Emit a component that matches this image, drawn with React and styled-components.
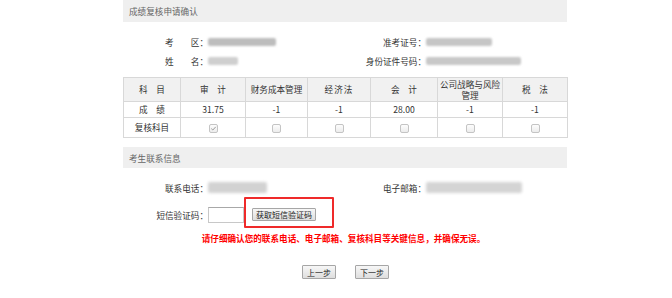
import React from "react";
import styled, { createGlobalStyle } from "styled-components";

const Global = createGlobalStyle`
  html, body { margin: 0; padding: 0; background: #fff; }
  body { font-family: "Noto Sans CJK SC", "Noto Sans", sans-serif; color: #333; }
`;

const Page = styled.div`
  width: 444px;
  margin-left: 123px;
  font-size: 8.6px;
`;

const SectionBar = styled.div`
  height: ${(p) => p.$h || 22}px;
  margin-top: ${(p) => p.$mt || 0}px;
  background: #efefef;
  padding-left: 6px;
  display: flex;
  align-items: center;
  color: #666;
  font-size: 8.6px;
`;

const InfoGrid = styled.div`
  display: grid;
  grid-template-columns: 85px 131px 87px 1fr;
  grid-auto-rows: 19px;
  align-items: center;
  padding-top: 10px;
`;

const Label = styled.div`
  text-align: right;
  white-space: nowrap;
  color: #333;
  line-height: 12px;
`;

const Value = styled.div`
  display: flex;
  align-items: center;
  position: relative;
  height: 100%;
  grid-column: ${(p) => p.$span || "auto"};
`;

const Blur = styled.span`
  display: inline-block;
  width: ${(p) => p.$w}px;
  height: ${(p) => p.$h || 8}px;
  background: ${(p) => p.$c || "#bdbdbd"};
  filter: blur(${(p) => p.$b || 0.8}px);
  border-radius: 2px;
`;

const Table = styled.table`
  width: 444px;
  margin-top: 7px;
  border-collapse: collapse;
  table-layout: fixed;
  font-size: 8.6px;
`;

const Th = styled.th`
  background: #f1f1f1;
  border: 1px solid #d8d8d8;
  font-weight: normal;
  color: #333;
  height: 23px;
  padding: 0 1px;
  line-height: 10.5px;
  text-align: center;
  letter-spacing: ${(p) => (p.$ls ? p.$ls : 0)}px;
`;

const Td = styled.td`
  border: 1px solid #d8d8d8;
  text-align: center;
  color: #333;
  padding: 0;
  line-height: 11px;
  height: ${(p) => p.$h}px;
`;

const Check = styled.span`
  display: inline-block;
  width: 7px;
  height: 7px;
  border: 1px solid #c4c4c4;
  border-radius: 2px;
  background: linear-gradient(#fdfdfd, #ececec);
  vertical-align: middle;
  position: relative;
  svg { position: absolute; left: 0; top: 0; }
`;

const ContactGrid = styled(InfoGrid)`
  grid-template-rows: 19px 35px;
`;

const CodeInput = styled.input`
  width: 36px;
  height: 16px;
  box-sizing: border-box;
  border: 1px solid #c8c8c8;
  border-top-color: #a8a8a8;
  margin: 0 8px 0 0;
  padding: 0;
  outline: none;
`;

const Btn = styled.button`
  height: ${(p) => p.$h || 13}px;
  box-sizing: border-box;
  padding: 0 ${(p) => p.$px || 4}px;
  border: 1px solid #a6a6a6;
  border-radius: 1px;
  background: linear-gradient(#f7f7f7, #dedede);
  font-family: "Noto Sans CJK SC", sans-serif;
  font-size: 8px;
  line-height: 11px;
  color: #222;
  cursor: pointer;
`;

const RedBox = styled.div`
  position: absolute;
  left: 36px;
  top: 0;
  width: 90px;
  height: 31px;
  box-sizing: border-box;
  border: 2px solid #ef2a2a;
  border-radius: 1px;
  pointer-events: none;
`;

const Notice = styled.div`
  text-align: center;
  color: #ff0000;
  font-weight: bold;
  font-size: 8.6px;
  line-height: 12px;
  padding-right: 3px;
`;

const NavRow = styled.div`
  display: flex;
  justify-content: center;
  gap: 19px;
  margin-top: 21px;
  padding-left: 1px;
`;

const cols = [57, 65, 62, 63, 67, 65, 65];

function Box({ checked }) {
  return (
    <Check>
      {checked && (
        <svg width="7" height="7" viewBox="0 0 7 7">
          <path d="M1.3 3.6 L2.8 5 L5.8 1.8" fill="none" stroke="#9a9a9a" strokeWidth="1" />
        </svg>
      )}
    </Check>
  );
}

export default function App() {
  return (
    <>
      <Global />
      <Page>
        <SectionBar>成绩复核申请确认</SectionBar>
        <InfoGrid>
          <Label>考　　区：</Label>
          <Value><Blur $w={68} /></Value>
          <Label>准考证号：</Label>
          <Value><Blur $w={66} $c="#c6c6c6" /></Value>
          <Label>姓　　名：</Label>
          <Value><Blur $w={30} $c="#cfcfcf" /></Value>
          <Label>身份证件号码：</Label>
          <Value><Blur $w={95} $c="#c8c8c8" /></Value>
        </InfoGrid>

        <Table>
          <colgroup>
            {cols.map((w, i) => (
              <col key={i} style={{ width: w }} />
            ))}
          </colgroup>
          <thead>
            <tr>
              <Th>科　目</Th>
              <Th>审　计</Th>
              <Th>财务成本管理</Th>
              <Th $ls={1}>经济法</Th>
              <Th>会　计</Th>
              <Th>公司战略与风险<br />管理</Th>
              <Th>税　法</Th>
            </tr>
          </thead>
          <tbody>
            <tr>
              <Td $h={15}>成　绩</Td>
              <Td $h={15}>31.75</Td>
              <Td $h={15}>-1</Td>
              <Td $h={15}>-1</Td>
              <Td $h={15}>28.00</Td>
              <Td $h={15}>-1</Td>
              <Td $h={15}>-1</Td>
            </tr>
            <tr>
              <Td $h={19}>复核科目</Td>
              <Td $h={19}><Box checked /></Td>
              <Td $h={19}><Box /></Td>
              <Td $h={19}><Box /></Td>
              <Td $h={19}><Box /></Td>
              <Td $h={19}><Box /></Td>
              <Td $h={19}><Box /></Td>
            </tr>
          </tbody>
        </Table>

        <SectionBar $mt={9} $h={21}>考生联系信息</SectionBar>
        <ContactGrid>
          <Label>联系电话：</Label>
          <Value><Blur $w={59} $h={11} $c="#d2d2d2" $b={1.4} /></Value>
          <Label>电子邮箱：</Label>
          <Value><Blur $w={96} $h={11} $c="#d4d4d4" $b={1.4} /></Value>
          <Label>短信验证码：</Label>
          <Value $span="2 / -1">
            <CodeInput type="text" />
            <Btn $px={3}>获取短信验证码</Btn>
            <RedBox />
          </Value>
        </ContactGrid>
        <Notice>请仔细确认您的联系电话、电子邮箱、复核科目等关键信息，并确保无误。</Notice>
        <NavRow>
          <Btn $h={14}>上一步</Btn>
          <Btn $h={14}>下一步</Btn>
        </NavRow>
      </Page>
    </>
  );
}
